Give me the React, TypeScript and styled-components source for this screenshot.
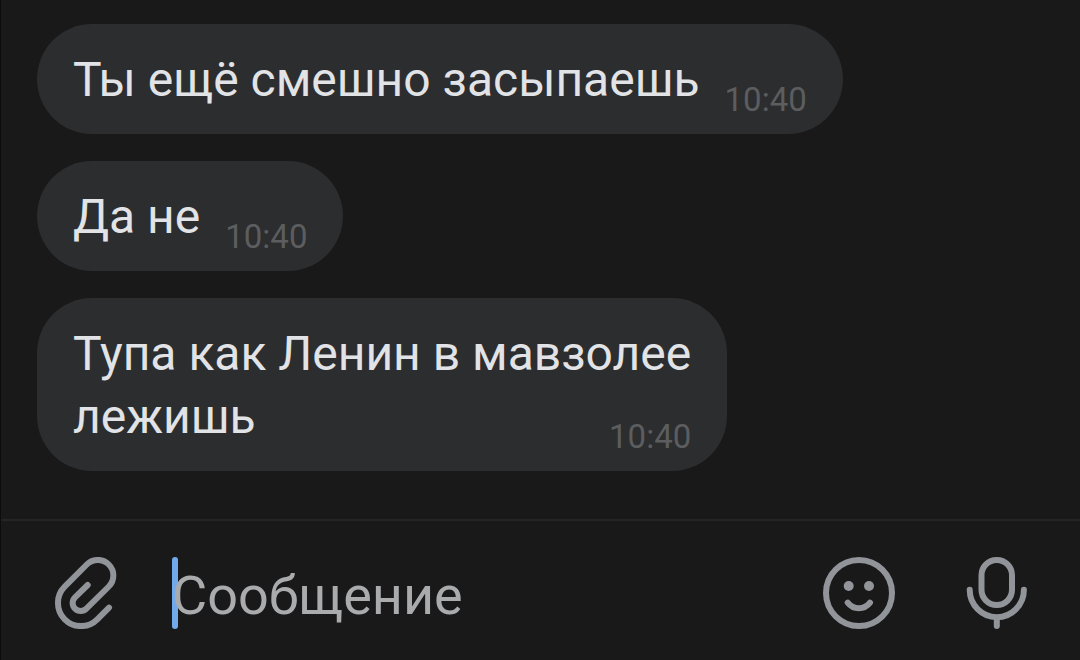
import React from 'react';
import styled, { createGlobalStyle } from 'styled-components';

const GlobalStyle = createGlobalStyle`
  * { box-sizing: border-box; }
  body { margin: 0; background: #19191a; font-family: Roboto, "Noto Sans", sans-serif; }
`;

const Page = styled.main`
  min-height: 100vh;
  display: flex;
  flex-direction: column;
  border-left: 1px solid #0c0c0c;
`;

const Messages = styled.ul`
  flex: 1;
  margin: 0;
  padding: 24px 36px 48px;
  list-style: none;
  display: flex;
  flex-direction: column;
  align-items: flex-start;
  gap: 27px;
`;

const Bubble = styled.li`
  max-width: 100%;
  padding: 24px 36px 23px;
  border-radius: 55px;
  background: #2c2d2f;
`;

const Text = styled.p`
  margin: 0;
  color: #e1e3e6;
  font-size: 48px;
  line-height: 63px;
`;

const Time = styled.time`
  float: right;
  margin-left: 25px;
  padding-top: 32px;
  color: #5c5d5f;
  font-size: 33px;
  line-height: 40px;
  height: 63px;
`;

const Composer = styled.form`
  display: flex;
  align-items: center;
  gap: 50px;
  padding: 36px 47px 31px 49px;
  border-top: 2px solid #252526;
`;

const Field = styled.div`
  position: relative;
  flex: 1;
  min-width: 0;
  height: 72px;
`;

const Caret = styled.span`
  position: absolute;
  top: 0;
  left: 0;
  width: 6px;
  height: 72px;
  border-radius: 3px;
  background: #71aaeb;
`;

const Input = styled.input`
  position: relative;
  display: block;
  width: 100%;
  height: 72px;
  border: 0;
  padding: 4px 0 0;
  outline: 0;
  background: none;
  color: #e1e3e6;
  caret-color: transparent;
  font: 54px/68px Roboto, "Noto Sans", sans-serif;
  &::placeholder { color: #aaabad; opacity: 1; }
`;

const Actions = styled.div`
  display: flex;
  gap: 66px;
`;

const IconButton = styled.button`
  display: flex;
  padding: 0;
  border: 0;
  background: none;
  color: #919499;
  cursor: pointer;
`;

const Icon = styled.svg`
  width: 72px;
  height: 72px;
  fill: none;
  stroke: currentColor;
  stroke-width: 6;
  stroke-linecap: round;
  stroke-linejoin: round;
`;

const messages = [
  { lines: ['Ты ещё смешно засыпаешь'], time: '10:40' },
  { lines: ['Да не'], time: '10:40' },
  { lines: ['Тупа как Ленин в мавзолее', 'лежишь'], time: '10:40' },
];

export default function App() {
  return (
    <Page>
      <GlobalStyle />
      <Messages>
        {messages.map(({ lines, time }) => (
          <Bubble key={lines[0]}>
            <Text>
              {lines.map((line, i) => (
                <React.Fragment key={line}>
                  {i > 0 && <br />}
                  {line}
                </React.Fragment>
              ))}
              <Time dateTime={time}>{time}</Time>
            </Text>
          </Bubble>
        ))}
      </Messages>
      <Composer onSubmit={(e) => e.preventDefault()}>
        <IconButton type="button" aria-label="Прикрепить">
          <Icon viewBox="0 0 72 72">
            <path d="M59 50.6 47.3 62.3A23 23 0 0 1 14.7 29.7L36.8 7.5A15.5 15.5 0 0 1 58.8 29.5L36.4 51.7A8 8 0 0 1 25 40.3L37.7 28" />
          </Icon>
        </IconButton>
        <Field>
          <Caret />
          <Input aria-label="Сообщение" placeholder="Сообщение" />
        </Field>
        <Actions>
          <IconButton type="button" aria-label="Смайлы">
            <Icon viewBox="0 0 72 72">
              <circle cx="36" cy="36" r="33" />
              <circle cx="25.7" cy="29" r="5" fill="currentColor" stroke="none" />
              <circle cx="46" cy="29" r="5" fill="currentColor" stroke="none" />
              <path d="M24.7 45.6C27.5 49.2 31.5 51.2 35.8 51.2S44.2 49.2 47 45.6" />
            </Icon>
          </IconButton>
          <IconButton type="button" aria-label="Голосовое сообщение">
            <Icon viewBox="0 0 72 72">
              <rect x="20.5" y="3" width="30.5" height="45" rx="15.2" />
              <path d="M8.7 32.8A27.1 27.4 0 0 0 62.9 32.8M35.8 61V69" />
            </Icon>
          </IconButton>
        </Actions>
      </Composer>
    </Page>
  );
}
